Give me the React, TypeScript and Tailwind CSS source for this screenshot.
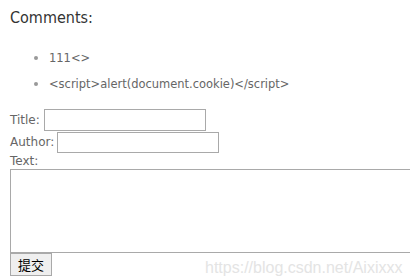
export default function App() {
  return (
    <div className="relative h-[280px] w-[410px] overflow-hidden bg-white px-[10px] pt-[8px] font-['DejaVu_Sans',sans-serif] text-[12px] text-[#666]">
      <h3 className="text-[16px] leading-[20px] text-[#333] [font-stretch:condensed] font-['DejaVu_Sans_Condensed','DejaVu_Sans',sans-serif]">
        Comments:
      </h3>
      <ul className="mt-[22px] list-disc pl-[39px] text-[12.75px] font-['DejaVu_Sans_Condensed','DejaVu_Sans',sans-serif] [font-stretch:condensed] marker:text-[#999]">
        <li className="leading-[16px]">111&lt;&gt;</li>
        <li className="mt-[10px] leading-[16px]">
          &lt;script&gt;alert(document.cookie)&lt;/script&gt;
        </li>
      </ul>
      <form className="mt-[17px] leading-[22px]" onSubmit={(e) => e.preventDefault()}>
        <div className="flex items-center gap-[4px]">
          <span>Title:</span>
          <input className="h-[22px] w-[162px] border border-[#a9a9a9]" />
        </div>
        <div className="flex items-center gap-[3px]">
          <span>Author:</span>
          <input className="h-[21px] w-[162px] border border-[#a9a9a9]" />
        </div>
        <div className="leading-[16px]">Text:</div>
        <textarea className="block h-[84px] w-[420px] resize-none border border-[#a9a9a9]" />
        <button
          type="submit"
          className="block h-[23px] w-[42px] border border-[#a9a9a9] bg-[#efefef] font-['Noto_Sans_CJK_SC',sans-serif] text-[13px] leading-[20px] text-black"
        >
          提交
        </button>
      </form>
      <span className="pointer-events-none absolute left-[205px] top-[256px] font-['Liberation_Sans',sans-serif] text-[16px] text-[#e4e4e4]">
        https://blog.csdn.net/Aixixxx
      </span>
    </div>
  );
}
